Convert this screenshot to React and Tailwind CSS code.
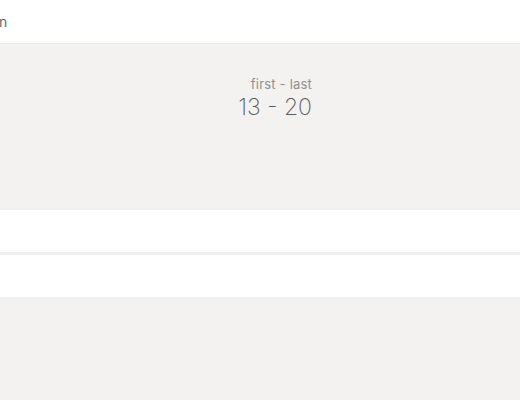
export default function App() {
  return (
    <div
      className="w-[520px] h-[400px] overflow-hidden bg-white"
      style={{ fontFamily: "Inter, 'Noto Sans', sans-serif" }}
    >
      <div className="h-[43px] flex items-center">
        <span className="text-[14px] text-[#6b6b6b] -ml-px">n</span>
      </div>
      <div className="h-px bg-[#ececea]" />
      <div className="h-[164px] bg-[#f3f2f0] flex justify-start">
        <div className="w-[312px] flex flex-col items-end pt-[32px]">
          <span className="text-[13px] leading-[17px] text-[#8f8f8f] tracking-[0.2px]">first - last</span>
          <span className="text-[23px] leading-[28px] font-extralight text-[#5a5a5a]">13 - 20</span>
        </div>
      </div>
      <div className="h-[2px] bg-[#f0f0f0]" />
      <div className="h-[42px] bg-white" />
      <div className="h-[3px] bg-[#f0f0f0]" />
      <div className="h-[42px] bg-white" />
      <div className="h-[3px] bg-[#f0f0f0]" />
      <div className="h-[104px] bg-[#f3f2f0]" />
    </div>
  );
}
